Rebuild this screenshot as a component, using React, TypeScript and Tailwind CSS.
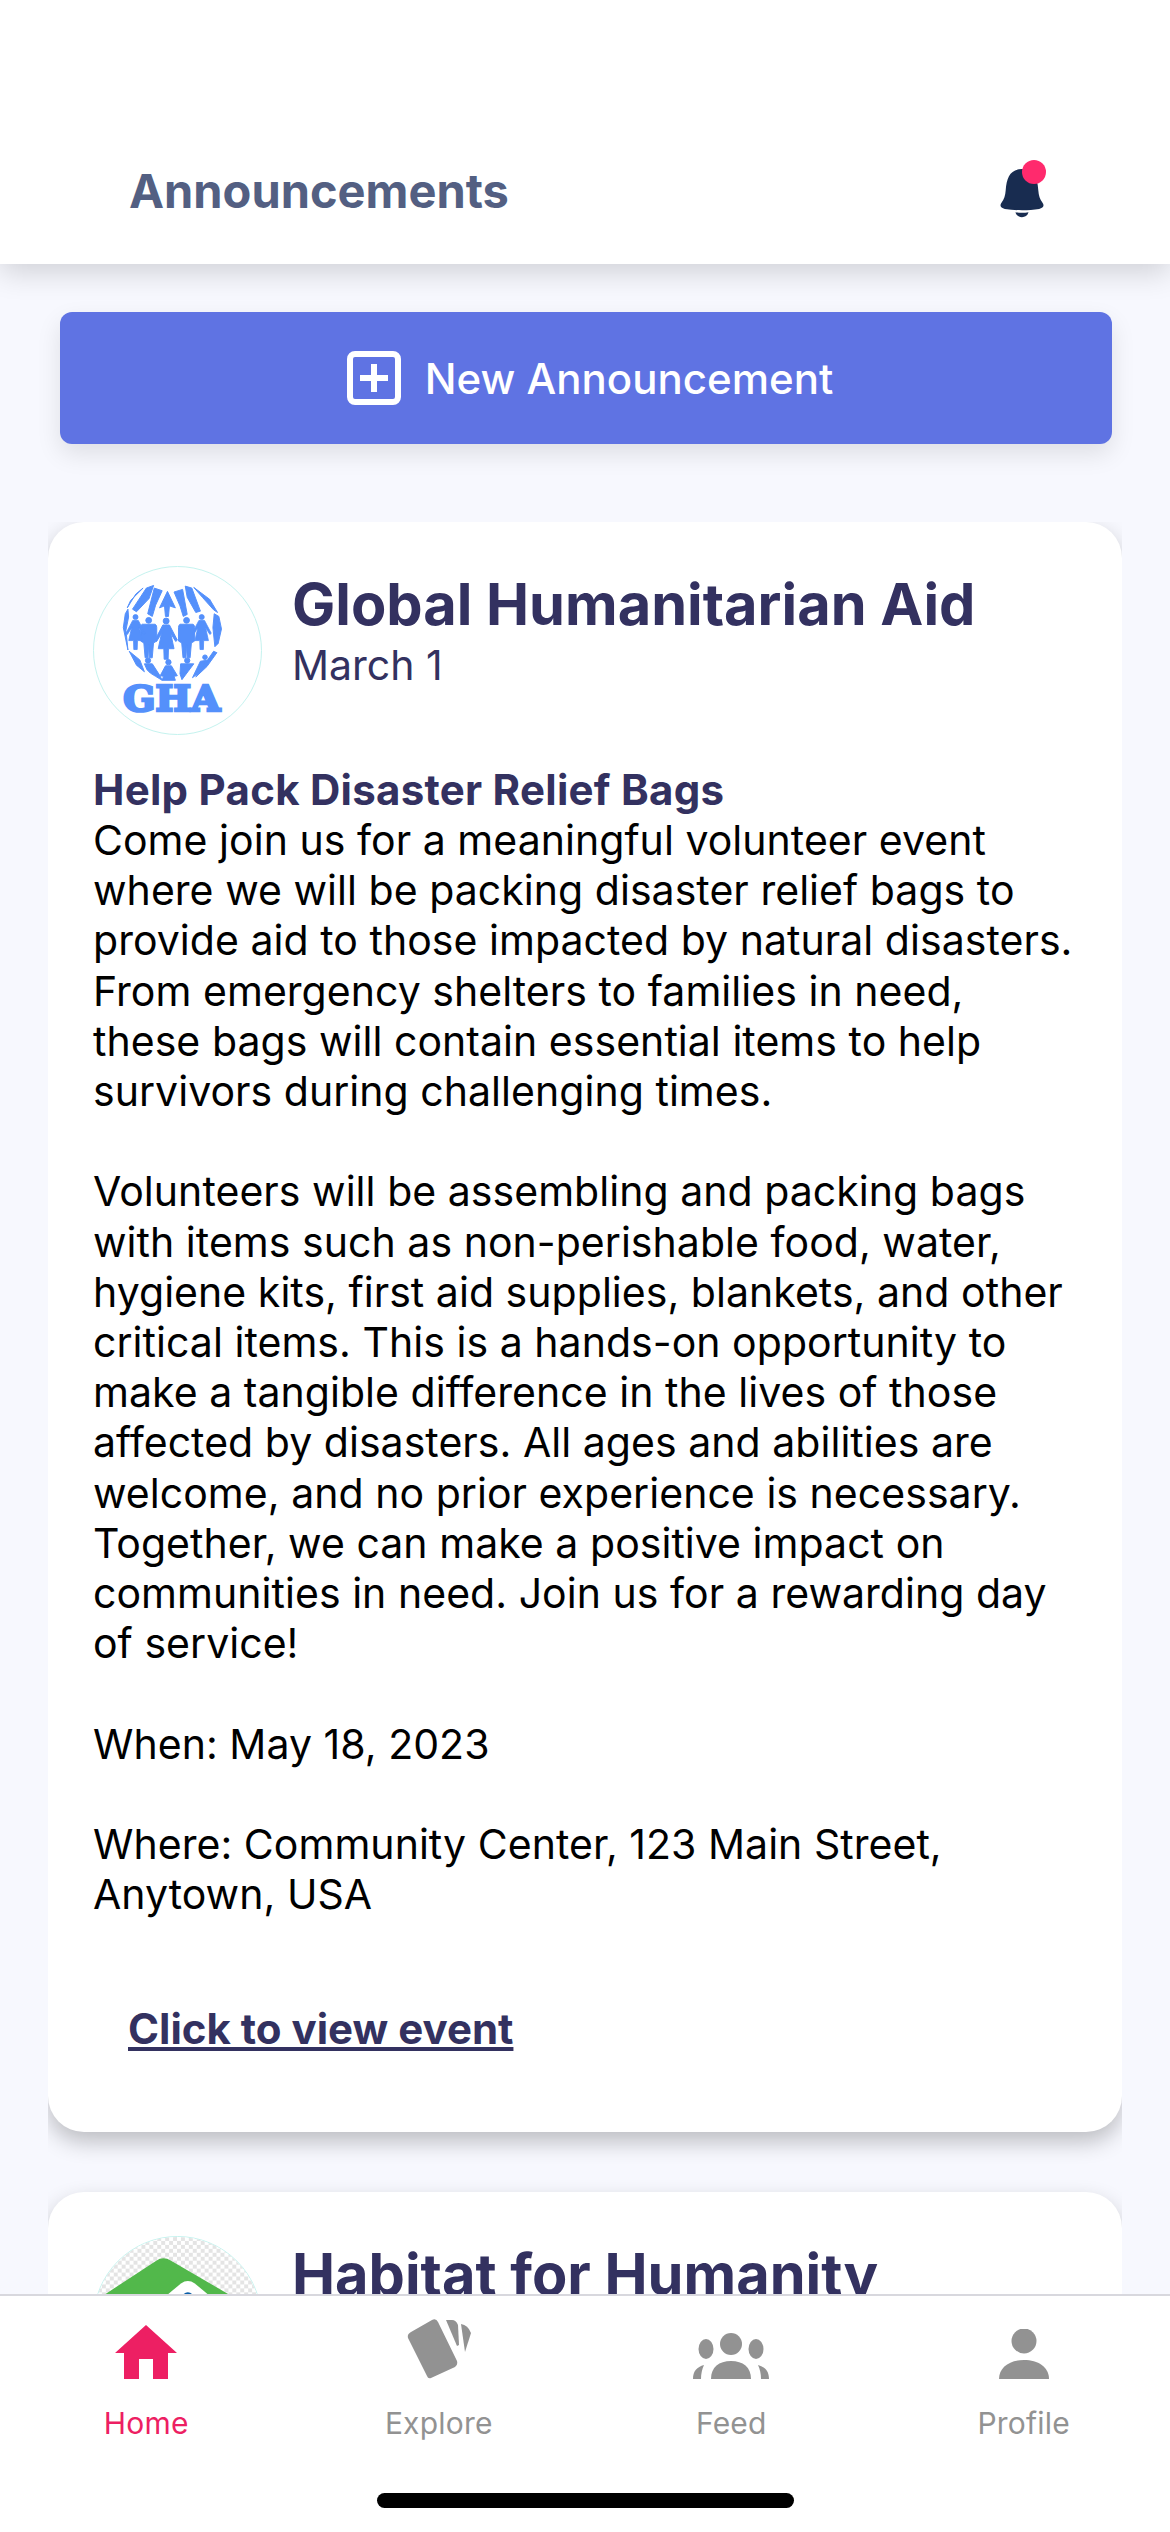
const figures: [number, number, number, "m" | "w"][] = [
  [288, 212, 1, "w"],
  [235, 210, 0.98, "m"],
  [350, 210, 0.98, "m"],
  [195, 200, 0.85, "w"],
  [396, 200, 0.85, "w"],
];

function Woman({ x, y, s }: { x: number; y: number; s: number }) {
  return (
    <g transform={`translate(${x} ${y}) scale(${s})`}>
      <circle cx="0" cy="0" r="9" />
      <path d="M-10 12 L10 12 L34 58 L29 62 L14 38 L24 84 L7 84 L6 116 L-6 116 L-7 84 L-24 84 L-14 38 L-29 62 L-34 58 Z" />
    </g>
  );
}

function Man({ x, y, s }: { x: number; y: number; s: number }) {
  return (
    <g transform={`translate(${x} ${y}) scale(${s})`}>
      <circle cx="0" cy="0" r="9" />
      <path d="M-20 12 L20 12 Q25 14 25 22 L25 64 L15 70 L11 116 L2 116 L0 76 L-2 116 L-11 116 L-15 70 L-25 64 L-25 22 Q-25 14 -20 12 Z" />
    </g>
  );
}

function GhaLogo() {
  return (
    <svg viewBox="69 48 507 507" className="h-full w-full">
      <g fill="#5490fb" stroke="#5490fb" strokeWidth="3" strokeLinejoin="round">
        {figures.map(([x, y, s, kind]) =>
          kind === "m" ? <Man key={x} x={x} y={y} s={s} /> : <Woman key={x} x={x} y={y} s={s} />,
        )}
        {/* top row, figures lean in towards the pole */}
        <path d="M292 122 L316 172 L298 166 L295 198 L286 198 L283 166 L268 172 Z" />
        <path d="M312 124 L338 116 L352 192 L340 198 L330 166 Z" />
        <path d="M276 120 L252 112 L232 190 L246 198 L256 164 Z" />
        <path d="M346 106 L366 112 L392 182 L378 186 L352 140 Z" />
        <path d="M250 104 L228 112 L186 176 L198 184 L236 144 Z" />
        <path d="M180 150 L218 112 L196 130 L170 172 Z" />
        <path d="M372 110 L420 146 L444 186 L432 178 L398 140 Z" />
        <path d="M434 190 L448 198 L456 236 L446 280 L436 290 L430 232 Z" />
        <path d="M158 232 L164 190 L172 176 L174 200 L166 240 L172 300 Z" />
        {/* bottom row */}
        <circle cx="233" cy="332" r="8" />
        <path d="M222 342 L246 342 L268 376 L276 392 L256 380 L240 370 L230 360 Z" />
        <circle cx="295" cy="337" r="8" />
        <path d="M286 348 L304 348 L322 378 L312 380 L316 392 L276 392 L280 380 L270 378 Z" />
        <circle cx="352" cy="332" r="8" />
        <path d="M332 342 L372 342 L354 366 L336 390 L330 372 Z" />
        <path d="M176 304 L208 330 L222 366 L198 346 Z" />
        <circle cx="406" cy="322" r="7" />
        <path d="M392 334 L420 330 L396 362 L368 384 Z" />
        <path d="M432 304 L442 308 L412 350 L378 382 Z" />
      </g>
      <text
        x="305"
        y="484"
        textAnchor="middle"
        fill="#5490fb"
        stroke="#5490fb"
        strokeWidth="8"
        fontSize="108"
        fontWeight="700"
        textLength="294"
        lengthAdjust="spacingAndGlyphs"
        fontFamily="'DejaVu Serif', serif"
      >
        GHA
      </text>
    </svg>
  );
}

function HabitatLogo() {
  return (
    <svg viewBox="0 0 169 169" className="h-full w-full">
      <defs>
        <pattern id="checker" width="8" height="8" patternUnits="userSpaceOnUse">
          <rect width="8" height="8" fill="#ffffff" />
          <rect width="4" height="4" fill="#e4e4e4" />
          <rect x="4" y="4" width="4" height="4" fill="#e4e4e4" />
        </pattern>
      </defs>
      <rect width="169" height="169" fill="url(#checker)" />
      <path d="M2 64 L63 24 Q70 19 78 24 L150 66 L150 169 L2 169 Z" fill="#52b84b" />
      <path d="M58 72 L88 47 Q95 42 102 47 L132 72 L132 169 L58 169 Z" fill="#ffffff" />
      <circle cx="95" cy="62" r="6" fill="#0a5ea8" />
    </svg>
  );
}

function BellIcon() {
  return (
    <svg width="44" height="49" viewBox="0 0 54 60" className="block">
      <path
        d="M27 0 C13 0 8 10 7 26 C6.5 33 5 37 2 41 C-1 45 1 48 6 49 C19 51 35 51 48 49 C53 48 55 45 52 41 C49 37 47.5 33 47 26 C46 10 41 0 27 0 Z"
        fill="#182c50"
      />
      <path d="M19 53 C24 54 30 54 35 53 C33 61 21 61 19 53 Z" fill="#182c50" />
    </svg>
  );
}

function PlusSquare() {
  return (
    <svg width="54" height="54" viewBox="0 0 54 54" fill="none" stroke="#ffffff" className="shrink-0">
      <rect x="3" y="3" width="48" height="48" rx="5" strokeWidth="6" />
      <path d="M27 13 V41 M13 27 H41" strokeWidth="6" />
    </svg>
  );
}

function HomeIcon() {
  return (
    <svg width="62" height="54" viewBox="0 0 62 54" fill="#ed1f63">
      <path d="M31 0 L62 28 L53 28 L53 54 L38 54 L38 34 L24 34 L24 54 L9 54 L9 28 L0 28 Z" />
    </svg>
  );
}

function ExploreIcon() {
  return (
    <svg width="68" height="60" viewBox="0 0 68 60" fill="#929292">
      <path d="M4 13 L25 1 Q29 -1 31 3 L50 42 Q51 46 48 48 L24 59 Q21 60 20 57 L1 19 Q0 15 4 13 Z" transform="translate(2 0)" />
      <path d="M37 1 L43 1 Q47 1 49 6 L50 26 L48 27 Z" transform="translate(4 0)" />
      <path d="M56 5 Q63 6 66 14 L60 33 Z" />
    </svg>
  );
}

function FeedIcon() {
  return (
    <svg width="76" height="46" viewBox="0 0 76 46" fill="#929292">
      <ellipse cx="38" cy="11" rx="11" ry="11" />
      <ellipse cx="13" cy="16" rx="7.5" ry="10" />
      <ellipse cx="63" cy="16" rx="7.5" ry="10" />
      <path d="M18 46 C18 34 26 28 38 28 C50 28 58 34 58 46 Z" />
      <path d="M0 46 C0 38 4 34 11 32 C9 36 8 41 8 46 Z" />
      <path d="M76 46 C76 38 72 34 65 32 C67 36 68 41 68 46 Z" />
    </svg>
  );
}

function ProfileIcon() {
  return (
    <svg width="52" height="50" viewBox="0 0 52 50" fill="#929292">
      <circle cx="26" cy="12" r="12.5" />
      <path d="M1 50 C1 38 12 31 26 31 C40 31 51 38 51 50 Z" />
    </svg>
  );
}

const tabs = [
  { label: "Home", icon: <HomeIcon />, active: true },
  { label: "Explore", icon: <ExploreIcon />, active: false },
  { label: "Feed", icon: <FeedIcon />, active: false },
  { label: "Profile", icon: <ProfileIcon />, active: false },
];

export default function App() {
  return (
    <div className="relative flex h-[2532px] w-[1170px] flex-col overflow-hidden bg-[#f7f8fe] font-['Inter',sans-serif]">
      {/* Header */}
      <header className="relative z-10 flex h-[264px] shrink-0 items-end justify-between bg-white pb-[44px] pl-[129px] pr-[126px] shadow-[0_8px_28px_rgba(0,0,0,0.16)]">
        <h1 className="text-[47px] font-bold leading-[58px] text-[#535f82]">Announcements</h1>
        <div className="relative mb-[2px]">
          <BellIcon />
          <span className="absolute right-[-2px] top-[-9px] h-[24px] w-[24px] rounded-full bg-[#ff2a6d]" />
        </div>
      </header>

      {/* Feed */}
      <main className="flex min-h-0 flex-1 flex-col overflow-hidden pl-[48px] pr-[48px] pt-[48px]">
        <button className="ml-[12px] mr-[10px] flex h-[132px] shrink-0 items-center justify-center gap-[24px] rounded-[12px] bg-[#5f73e3] pl-[8px] text-[42px] font-medium text-white shadow-[0_10px_24px_rgba(0,0,0,0.1)]">
          <PlusSquare />
          New Announcement
        </button>

        {/* the list clips the card shadows at its own left and right edge */}
        <div className="mt-[78px] min-h-0 flex-1 overflow-hidden">
          <article className="h-[1610px] rounded-[36px] bg-white px-[45px] pt-[44px] shadow-[0_10px_22px_rgba(0,0,0,0.24)]">
            <div className="flex items-start gap-[30px]">
              <div className="h-[169px] w-[169px] shrink-0 overflow-hidden rounded-full border border-[#c5f3ef]">
                <GhaLogo />
              </div>
              <div className="pt-[2px]">
                <h2 className="text-[57.7px] font-bold leading-[72px] text-[#333160]">Global Humanitarian Aid</h2>
                <p className="text-[41px] leading-[50px] text-[#333160]">March 1</p>
              </div>
            </div>
            <h3 className="mt-[30px] text-[42px] font-bold leading-[50px] tracking-[0.27px] text-[#333160]">
              Help Pack Disaster Relief Bags
            </h3>
            <p className="whitespace-pre-line text-[41px] leading-[50.2px] tracking-[0.04px] text-black">
              {`Come join us for a meaningful volunteer event
where we will be packing disaster relief bags to
provide aid to those impacted by natural disasters.
From emergency shelters to families in need,
these bags will contain essential items to help
survivors during challenging times.

Volunteers will be assembling and packing bags
with items such as non-perishable food, water,
hygiene kits, first aid supplies, blankets, and other
critical items. This is a hands-on opportunity to
make a tangible difference in the lives of those
affected by disasters. All ages and abilities are
welcome, and no prior experience is necessary.
Together, we can make a positive impact on
communities in need. Join us for a rewarding day
of service!

When: May 18, 2023

Where: Community Center, 123 Main Street,
Anytown, USA`}
            </p>
            <a className="ml-[35px] mt-[85px] block text-[42px] font-bold leading-[50px] text-[#333160] underline">
              Click to view event
            </a>
          </article>

          <article className="mt-[60px] rounded-[36px] bg-white px-[45px] pt-[44px] shadow-[0_10px_22px_rgba(0,0,0,0.24)]">
            <div className="flex items-start gap-[30px]">
              <div className="h-[169px] w-[169px] shrink-0 overflow-hidden rounded-full border border-[#c5f3ef]">
                <HabitatLogo />
              </div>
              <h2 className="pt-[2px] text-[57.7px] font-bold leading-[72px] text-[#333160]">Habitat for Humanity</h2>
            </div>
          </article>
        </div>
      </main>

      {/* Tab bar */}
      <nav className="relative z-10 grid h-[238px] shrink-0 grid-cols-4 border-t-2 border-[#d8d8de] bg-white">
        {tabs.map((tab) => (
          <div key={tab.label} className="flex flex-col items-center">
            <div className="flex h-[83px] items-end">{tab.icon}</div>
            <span
              className={`mt-[27px] text-[30px] leading-[34px] tracking-[0.2px] ${tab.active ? "text-[#ed1f63]" : "text-[#929292]"}`}
            >
              {tab.label}
            </span>
          </div>
        ))}
        <span className="absolute bottom-[24px] left-[377px] h-[15px] w-[417px] rounded-full bg-black" />
      </nav>
    </div>
  );
}
